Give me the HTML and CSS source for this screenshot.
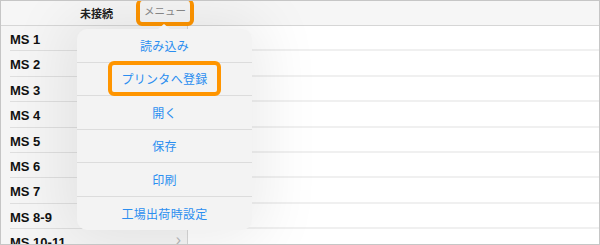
FILE: index.html
```html
<!DOCTYPE html>
<html lang="ja">
<head>
    <meta charset="UTF-8">
    <title>メニュー</title>
    <link rel="stylesheet" href="styles.css">
</head>
<body>
    <div class="frame">
        <div class="topbar">
            <span class="status">未接続</span>
            <span class="menu-btn">メニュー</span>
        </div>
        <div class="main">
            <ul class="side-list">
                <li>MS 1</li>
                <li>MS 2</li>
                <li>MS 3</li>
                <li>MS 4</li>
                <li>MS 5</li>
                <li>MS 6</li>
                <li>MS 7</li>
                <li>MS 8-9</li>
                <li>MS 10-11<span class="chevron">&rsaquo;</span></li>
            </ul>
            <div class="detail">
                <div class="detail-row"></div>
                <div class="detail-row"></div>
                <div class="detail-row"></div>
                <div class="detail-row"></div>
                <div class="detail-row"></div>
                <div class="detail-row"></div>
                <div class="detail-row"></div>
                <div class="detail-row"></div>
                <div class="detail-row"></div>
            </div>
        </div>

        <!-- ポップオーバー -->
        <div class="popover">
            <div class="pop-item">読み込み</div>
            <div class="pop-item"><span class="highlight">プリンタへ登録</span></div>
            <div class="pop-item">開く</div>
            <div class="pop-item">保存</div>
            <div class="pop-item">印刷</div>
            <div class="pop-item">工場出荷時設定</div>
        </div>
    </div>
</body>
</html>
```

FILE: styles.css
```css
body {
    margin: 0;
    font-family: "Liberation Sans", "Noto Sans CJK JP", sans-serif;
    background-color: #fff;
}
.frame {
    position: relative;
    width: 600px;
    height: 245px;
    box-sizing: border-box;
    border: 1px solid #c6c6c6;
    overflow: hidden;
}
.topbar {
    height: 24px;
    background-color: #f6f6f6;
    border-bottom: 1px solid #d6d6d6;
    display: flex;
    align-items: center;
    font-size: 11px;
}
.status {
    margin-left: 79px;
    font-weight: bold;
    color: #222;
}
.menu-btn {
    margin-left: 23px;
    margin-top: -1px;
    padding: 2px 4px 4px 4px;
    font-size: 10.5px;
    color: #8a8a8a;
    border: 4px solid #ff9500;
    border-top-width: 2px;
    border-radius: 6px;
}
.main {
    display: flex;
    height: 219px;
}
.side-list {
    list-style: none;
    margin: 0;
    padding: 0;
    width: 186px;
    border-right: 1px solid #d6d6d6;
    background-color: #f5f5f5;
}
.side-list li {
    position: relative;
    height: 25.4px;
    box-sizing: border-box;
    margin-left: 9px;
    padding-top: 6px;
    border-bottom: 1px solid #dedede;
    font-size: 13px;
    font-weight: bold;
    color: #111;
}
.chevron {
    position: absolute;
    right: 6px;
    top: 2px;
    font-size: 16px;
    font-weight: normal;
    color: #b8b8b8;
}
.detail {
    flex: 1;
    background-color: #fff;
}
.detail-row {
    height: 25.4px;
    box-sizing: border-box;
    border-bottom: 2px solid #f0f0f0;
}
.popover {
    position: absolute;
    left: 76px;
    top: 28px;
    width: 175px;
    background-color: #f3f3f3;
    border-radius: 10px;
    box-shadow: 0 0 60px 12px rgba(0, 0, 0, 0.08);
}
.popover::before {
    content: "";
    position: absolute;
    left: 81px;
    top: -5px;
    border-left: 6px solid transparent;
    border-right: 6px solid transparent;
    border-bottom: 5px solid #f3f3f3;
}
.pop-item {
    height: 33.5px;
    box-sizing: border-box;
    display: flex;
    align-items: center;
    justify-content: center;
    border-bottom: 1px solid #dcdcdc;
    font-size: 12px;
    color: #2b8ef0;
    letter-spacing: 0.3px;
}
.pop-item:last-child {
    border-bottom: none;
}
.highlight {
    padding: 5px 9px;
    border: 4px solid #ff9500;
    border-radius: 6px;
}
```
